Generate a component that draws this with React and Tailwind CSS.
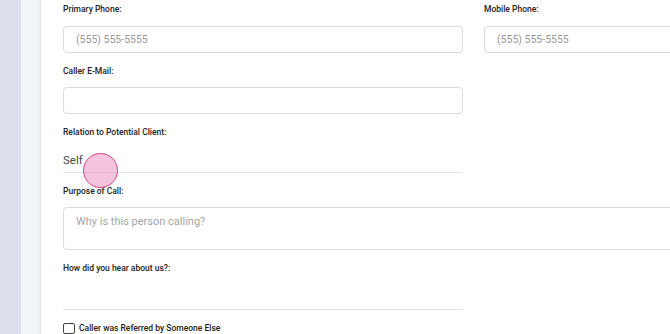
export default function App() {
  const label = 'text-[8.5px] font-medium text-[#222] leading-none'
  const input = 'h-[27px] w-full rounded-[4px] border border-[#dcdcdc] bg-white px-3 text-[10.5px] text-[#333] placeholder:text-[#9a9a9a] outline-none'

  return (
    <div className="flex h-[334px] w-[670px] overflow-hidden bg-[#f3f4f9] font-['Roboto',sans-serif]">
      <div className="w-[21px] shrink-0 bg-[#dadfe9]" />
      <div className="w-[19px] shrink-0" />
      <div className="relative flex-1 border-l border-[#e6e7ec] bg-white pl-[22px] shadow-[-1px_0_2px_rgba(0,0,0,0.05)]">
        <div className="grid grid-cols-[400px_1fr] gap-x-[21px] pt-[5px]">
          <label className={label}>Primary Phone:</label>
          <label className={label}>Mobile Phone:</label>
          <input className={input + ' mt-[12px]'} placeholder="(555) 555-5555" />
          <input className={input + ' mt-[12px] w-[200px]'} placeholder="(555) 555-5555" />

          <label className={label + ' col-span-2 mt-[14px]'}>Caller E-Mail:</label>
          <input className={input + ' mt-[12px]'} />
          <div />

          <label className={label + ' col-span-2 mt-[14px]'}>Relation to Potential Client:</label>
          <div className="mt-[13px] flex h-[23px] items-start border-b border-[#e2e2e2] pt-[2px] text-[11.5px] text-[#4a4a4a]">Self</div>
          <div />

          <label className={label + ' col-span-2 mt-[14px]'}>Purpose of Call:</label>
          <textarea
            className="col-span-2 mt-[12px] h-[43px] w-[640px] resize-none rounded-[4px] border border-[#dcdcdc] px-3 pt-[6px] text-[11px] placeholder:text-[#a5a5a5] outline-none"
            placeholder="Why is this person calling?"
          />

          <label className={label + ' col-span-2 mt-[14px]'}>How did you hear about us?:</label>
          <div className="mt-[36px] border-b border-[#e2e2e2]" />
          <div />

          <div className="col-span-2 mt-[13px] flex items-center gap-[4px]">
            <span className="h-[11px] w-[12px] rounded-[2px] border border-[#444]" />
            <span className={label}>Caller was Referred by Someone Else</span>
          </div>
        </div>

        <div className="pointer-events-none absolute left-[42px] top-[153px] h-[35px] w-[35px] rounded-full border-[1.5px] border-[#d9428a] bg-[#e87db3]/45" />
      </div>
    </div>
  )
}
